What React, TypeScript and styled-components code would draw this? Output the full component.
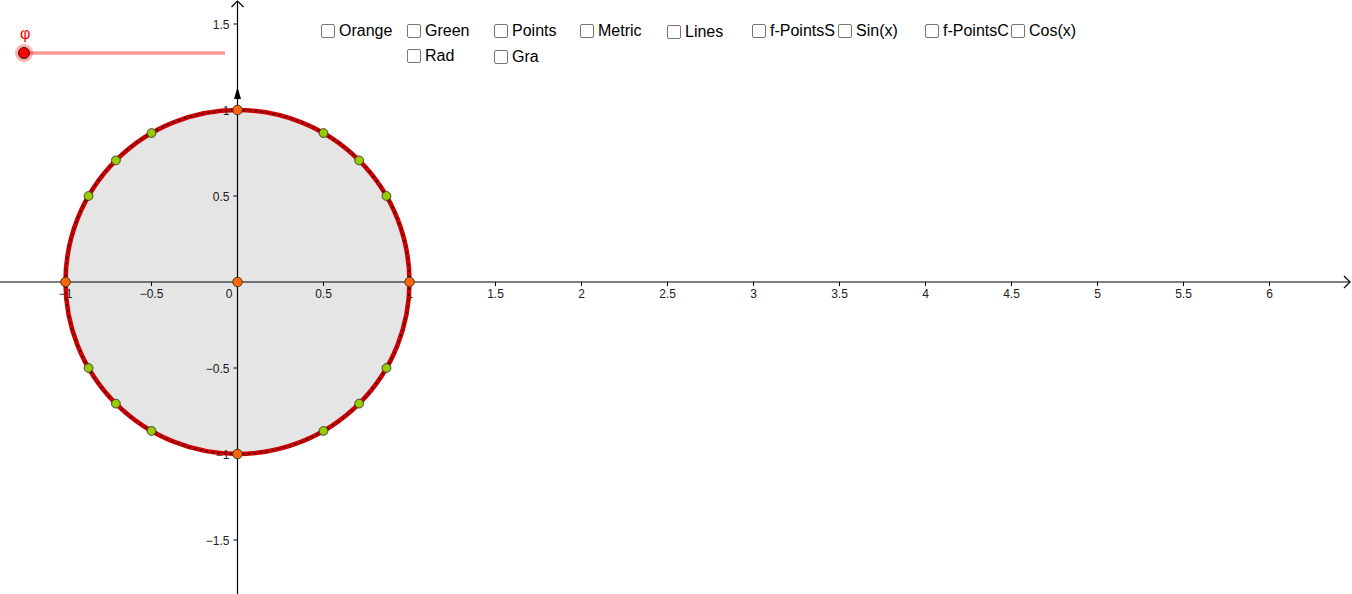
import React from "react";
import styled, { createGlobalStyle } from "styled-components";

const GlobalStyle = createGlobalStyle`
  html, body {
    margin: 0;
    padding: 0;
    background: #ffffff;
  }
`;

// graph view: origin and scale in screen pixels
const OX = 237.5;
const OY = 282;
const UNIT = 172;

const sx = (x: number) => OX + x * UNIT;
const sy = (y: number) => OY - y * UNIT;

interface Toggle {
  label: string;
  x: number;
  y: number;
}

const toggles: Toggle[] = [
  { label: "Orange", x: 321, y: 24 },
  { label: "Green", x: 407, y: 24 },
  { label: "Points", x: 494, y: 24 },
  { label: "Metric", x: 580, y: 24 },
  { label: "Lines", x: 667, y: 25 },
  { label: "f-PointsS", x: 752, y: 24 },
  { label: "Sin(x)", x: 838, y: 24 },
  { label: "f-PointsC", x: 925, y: 24 },
  { label: "Cos(x)", x: 1011, y: 24 },
  { label: "Rad", x: 407, y: 49 },
  { label: "Gra", x: 494, y: 50 },
];

const fmt = (v: number) => {
  const s = String(Math.abs(v));
  return v < 0 ? "\u2212" + s : s;
};

const xTicks: number[] = [];
for (let v = -1; v <= 6.01; v += 0.5) xTicks.push(Math.round(v * 10) / 10);
const yTicks = [-1.5, -1, -0.5, 0.5, 1, 1.5];

const greenAngles = [30, 45, 60, 120, 135, 150, 210, 225, 240, 300, 315, 330];
const orangeAngles = [0, 90, 180, 270];

export default function App() {
  return (
    <Applet>
      <GlobalStyle />
      <Graph width={1352} height={594} viewBox="0 0 1352 594">
        {/* axes */}
        <line x1={0} y1={OY} x2={1350} y2={OY} stroke="#000" strokeWidth={1.2} />
        <polyline
          points={`1344,276 1350,${OY} 1344,288`}
          fill="none"
          stroke="#000"
          strokeWidth={1.2}
        />
        <line x1={OX} y1={1} x2={OX} y2={594} stroke="#000" strokeWidth={1.2} />
        <polyline
          points={`${OX - 6},7 ${OX},1 ${OX + 6},7`}
          fill="none"
          stroke="#000"
          strokeWidth={1.2}
        />

        {xTicks.map((v) =>
          v === 0 ? null : (
            <g key={"x" + v}>
              <line x1={sx(v)} y1={OY} x2={sx(v)} y2={OY + 4} stroke="#000" />
              <AxisText x={sx(v)} y={OY + 16} textAnchor="middle">
                {fmt(v)}
              </AxisText>
            </g>
          )
        )}
        <AxisText x={OX - 5} y={OY + 16} textAnchor="end">
          0
        </AxisText>

        {yTicks.map((v) => (
          <g key={"y" + v}>
            <line x1={OX - 4} y1={sy(v)} x2={OX} y2={sy(v)} stroke="#000" />
            <AxisText x={OX - 8} y={sy(v) + 4.5} textAnchor="end">
              {fmt(v)}
            </AxisText>
          </g>
        ))}

        {/* unit circle */}
        <circle cx={OX} cy={OY} r={UNIT} fill="#000" fillOpacity={0.1} />
        <circle
          cx={OX}
          cy={OY}
          r={UNIT}
          fill="none"
          stroke="#cc0000"
          strokeWidth={4.6}
        />
        <circle
          cx={OX}
          cy={OY}
          r={UNIT}
          fill="none"
          stroke="#111"
          strokeWidth={1.6}
          strokeDasharray="1.6 4.4"
        />

        {/* vector to (0,1) */}
        <polygon
          points={`${OX},87 ${OX - 3.5},99 ${OX + 3.5},99`}
          fill="#000"
        />

        {greenAngles.map((a) => {
          const r = (a * Math.PI) / 180;
          return (
            <circle
              key={"g" + a}
              cx={sx(Math.cos(r))}
              cy={sy(Math.sin(r))}
              r={4.4}
              fill="#99cc00"
              stroke="#333"
              strokeWidth={0.9}
            />
          );
        })}
        <circle cx={OX} cy={OY} r={4.8} fill="#ff6600" stroke="#333" strokeWidth={0.9} />
        {orangeAngles.map((a) => {
          const r = (a * Math.PI) / 180;
          return (
            <circle
              key={"o" + a}
              cx={sx(Math.cos(r))}
              cy={sy(Math.sin(r))}
              r={4.8}
              fill="#ff6600"
              stroke="#333"
              strokeWidth={0.9}
            />
          );
        })}

        {/* slider φ */}
        <line
          x1={24}
          y1={53}
          x2={225}
          y2={53}
          stroke="#ff9999"
          strokeWidth={3.5}
        />
        <circle cx={24} cy={53} r={9} fill="#ff0000" fillOpacity={0.3} />
        <circle cx={24} cy={53} r={5.5} fill="#ff0000" stroke="#222" strokeWidth={1} />
        <SliderLabel x={20} y={39}>
          φ
        </SliderLabel>
      </Graph>

      {toggles.map((t) => (
        <CheckRow key={t.label} $x={t.x} $y={t.y}>
          <Box />
          <span>{t.label}</span>
        </CheckRow>
      ))}
    </Applet>
  );
}

const Applet = styled.div`
  position: relative;
  width: 1352px;
  height: 594px;
  overflow: hidden;
  background: #ffffff;
  font-family: "Liberation Sans", Arial, sans-serif;
`;

const Graph = styled.svg`
  display: block;
`;

const AxisText = styled.text`
  font-family: "Liberation Sans", Arial, sans-serif;
  font-size: 12px;
  fill: #222;
`;

const SliderLabel = styled.text`
  font-family: "Liberation Sans", Arial, sans-serif;
  font-size: 16px;
  fill: #ff0000;
`;

const CheckRow = styled.label<{ $x: number; $y: number }>`
  position: absolute;
  left: ${(p) => p.$x}px;
  top: ${(p) => p.$y - 2}px;
  display: flex;
  align-items: center;
  gap: 4px;
  height: 17px;
  font-size: 16px;
  line-height: 17px;
  color: #000;
  white-space: nowrap;
  cursor: pointer;
`;

const Box = styled.span`
  display: block;
  box-sizing: border-box;
  width: 14px;
  height: 14px;
  border: 1px solid #767676;
  border-radius: 2px;
  background: #fff;
`;
